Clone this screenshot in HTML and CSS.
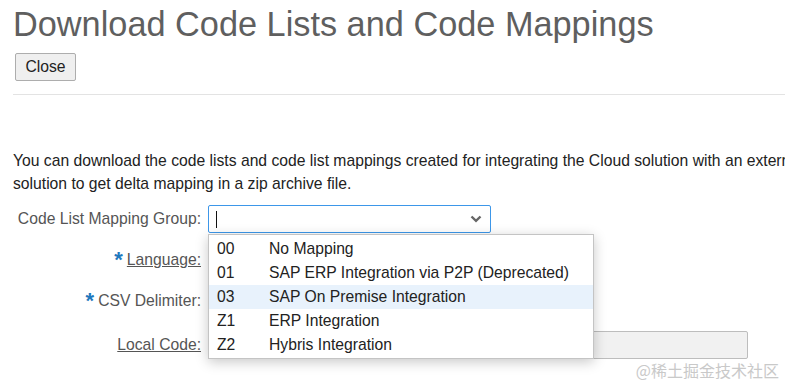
FILE: index.html
```html
<!DOCTYPE html>
<html lang="en">
<head>
  <meta charset="UTF-8" />
  <title>Download Code Lists and Code Mappings</title>
  <link rel="stylesheet" href="styles.css">
</head>
<body>

  <div class="page">
    <h1 class="title">Download Code Lists and Code Mappings</h1>
    <button class="btn">Close</button>
    <div class="rule"></div>

    <p class="intro">You can download the code lists and code list mappings created for integrating the Cloud solution with an external solution to get delta mapping in a zip archive file.</p>

    <div class="form">
      <label class="lbl">Code List Mapping Group:</label>
      <div class="combo">
        <div class="field focus">
          <span class="caret"></span>
          <svg class="chev" width="12" height="8" viewBox="0 0 12 8"><path d="M1.5 1.5 L6 5.8 L10.5 1.5" fill="none" stroke="#666" stroke-width="2.4"/></svg>
        </div>
        <ul class="menu">
          <li><span class="code">00</span>No Mapping</li>
          <li><span class="code">01</span>SAP ERP Integration via P2P (Deprecated)</li>
          <li class="hover"><span class="code">03</span>SAP On Premise Integration</li>
          <li><span class="code">Z1</span>ERP Integration</li>
          <li><span class="code">Z2</span>Hybris Integration</li>
        </ul>
      </div>

      <label class="lbl"><span class="req">*</span><u>Language:</u></label>
      <div class="field short"></div>

      <label class="lbl"><span class="req">*</span>CSV Delimiter:</label>
      <div class="field short"></div>

      <label class="lbl last"><u>Local Code:</u></label>
      <div class="field wide last"></div>
    </div>
  </div>

  <div class="mark">@稀土掘金技术社区</div>

</body>
</html>
```

FILE: styles.css
```css
html, body {
  margin:0; padding:0;
  overflow:hidden;
}
body {
  font-family: "Liberation Sans", Arial, sans-serif;
  font-size:15.7px;
  color:#222;
  background:#fff;
  width:785px;
  height:385px;
  position:relative;
}
.page { padding-left:13px; }
.title {
  margin:0;
  padding-top:3px;
  font-size:34.3px;
  font-weight:normal;
  line-height:42px;
  color:#5f5f5f;
  white-space:nowrap;
}
.btn {
  display:block;
  margin:8px 0 0 2px;
  width:61px; height:28px;
  background:#efefef;
  border:1px solid #adadad;
  border-radius:2px;
  font-family:inherit;
  font-size:15.7px;
  color:#222;
  padding:0;
}
.rule {
  margin-top:13px;
  height:1px;
  background:#e3e3e3;
}
.intro {
  margin:54px 0 0;
  width:830px;
  line-height:23px;
}
.form {
  display:grid;
  grid-template-columns:188px auto;
  column-gap:7px;
  row-gap:13px;
  margin-top:10px;
  justify-items:start;
  align-items:center;
}
.lbl {
  justify-self:end;
  color:#555;
}
.lbl u { text-decoration:underline; }
.req {
  color:#1f78bd;
  font-weight:bold;
  font-size:22px;
  line-height:14px;
  margin-right:4px;
  position:relative;
  top:2px;
}
.last { margin-top:3px; }
.combo { position:relative; }
.field {
  box-sizing:border-box;
  height:28px;
  border:1px solid #bdbdbd;
  border-radius:2px;
  background:#fff;
}
.combo .field {
  width:283px;
  display:flex;
  align-items:center;
  justify-content:space-between;
  padding:0 8px 0 7px;
}
.field.focus { border-color:#3d97e9; }
.caret {
  width:1px; height:17px;
  background:#111;
}
.field.short { width:283px; }
.field.wide {
  width:540px;
  background:#f1f1f1;
}
.menu {
  position:absolute;
  left:0; top:29px;
  z-index:2;
  margin:0;
  padding:2px 0 1px;
  list-style:none;
  width:386px;
  box-sizing:border-box;
  background:#fff;
  border:1px solid #c4c4c4;
  box-shadow:0 3px 12px rgba(0,0,0,0.22);
}
.menu li {
  height:24px;
  line-height:24px;
  padding-left:8px;
  white-space:nowrap;
}
.menu li.hover { background:#e8f2fc; }
.menu .code {
  display:inline-block;
  width:52px;
}
.mark {
  position:absolute;
  right:6px; bottom:5px;
  font-family:"Noto Sans CJK SC", sans-serif;
  font-size:16px;
  line-height:20px;
  color:#c9c9c9;
}
```
